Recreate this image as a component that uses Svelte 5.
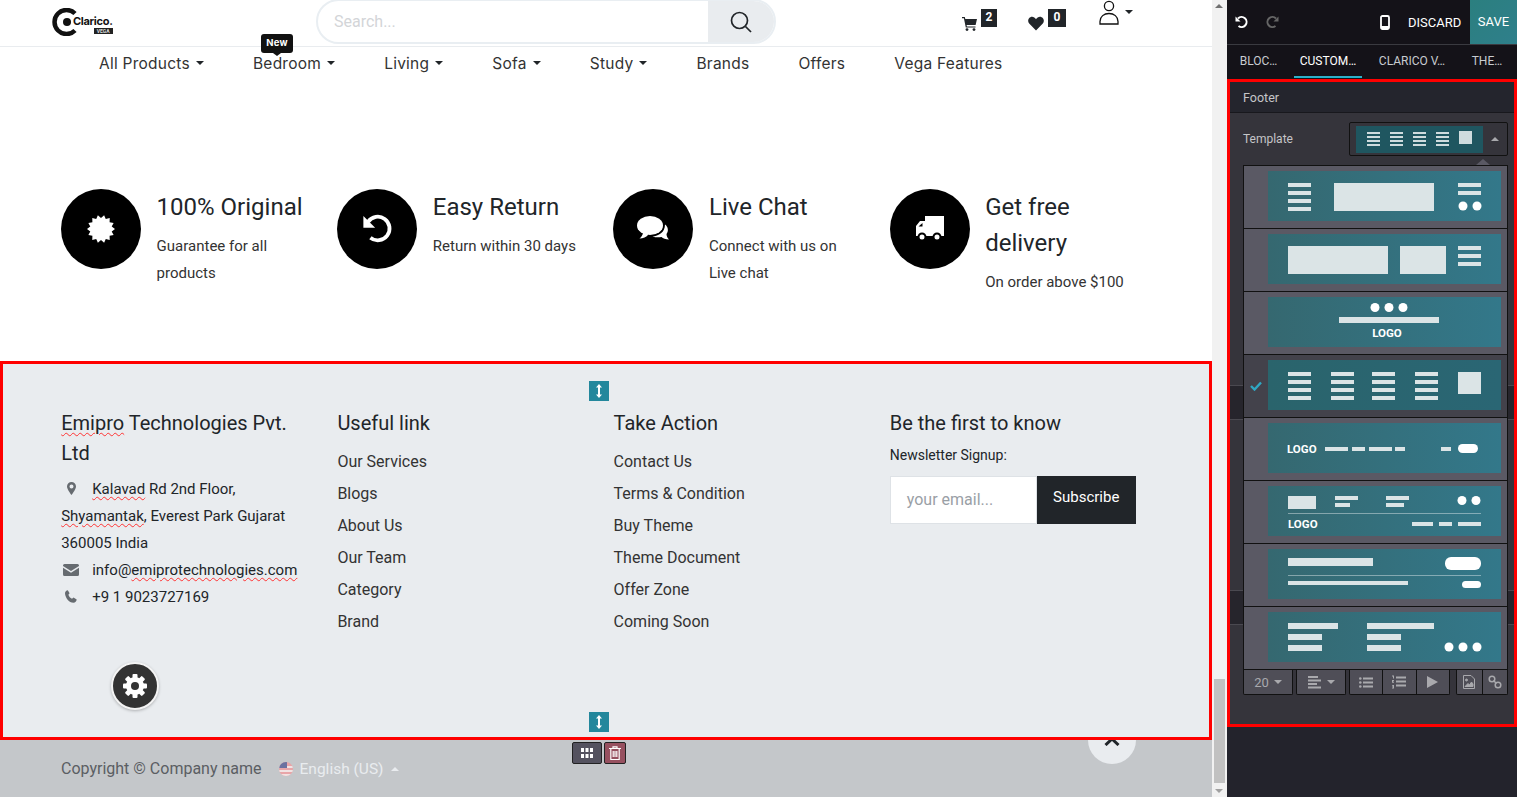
<script lang="ts">
  const nav = [
    { label: 'All Products', caret: true },
    { label: 'Bedroom', caret: true, badge: 'New' },
    { label: 'Living', caret: true },
    { label: 'Sofa', caret: true },
    { label: 'Study', caret: true },
    { label: 'Brands' },
    { label: 'Offers' },
    { label: 'Vega Features' },
  ];

  const usefulLinks = ['Our Services', 'Blogs', 'About Us', 'Our Team', 'Category', 'Brand'];
  const actionLinks = ['Contact Us', 'Terms & Condition', 'Buy Theme', 'Theme Document', 'Offer Zone', 'Coming Soon'];
  const tabs = ['BLOC…', 'CUSTOM…', 'CLARICO V…', 'THE…'];

  // starburst for the "100% Original" badge
  const burst = Array.from({ length: 28 }, (_, i) => {
    const a = (i * Math.PI) / 14;
    const r = i % 2 ? 11 : 14;
    return `${(14 + r * Math.cos(a)).toFixed(2)},${(14 + r * Math.sin(a)).toFixed(2)}`;
  }).join(' ');

  // [x, y, w, h, radius] and [cx, cy]; one entry per footer template
  const thumbs = [
    {
      rects: [[20,12,23,4],[20,20,23,4],[20,28,23,4],[20,36,23,4],[66,12,100,28],[190,12,23,4],[190,20,23,4]],
      dots: [[195,35],[209,35]],
    },
    {
      rects: [[20,12,100,28],[132,12,46,28],[190,12,23,4],[190,20,23,4],[190,28,23,4]],
    },
    {
      rects: [[71,20,100,6]],
      dots: [[107,10.5],[121,10.5],[135,10.5]],
      logo: [119, 40, 'middle'],
    },
    {
      rects: [[20,12,23,4],[20,20,23,4],[20,28,23,4],[20,36,23,4],[63,12,23,4],[63,20,23,4],[63,28,23,4],[63,36,23,4],
        [104,12,23,4],[104,20,23,4],[104,28,23,4],[104,36,23,4],[147,12,23,4],[147,20,23,4],[147,28,23,4],[147,36,23,4],[190,12,23,22]],
    },
    {
      rects: [[57,24,23,4],[84,24,13,4],[101,24,23,4],[127,24,10,4],[173,24,10,4],[190,21,20,9,4.5]],
      logo: [19, 30, 'start'],
    },
    {
      rects: [[20,10,28,13],[67,10,23,4],[67,17,15,4],[118,10,23,4],[118,17,18,4],[144,36,21,4],[171,36,13,4],[190,36,23,4]],
      dots: [[194,14.5],[208,14.5]],
      lines: [27],
      logo: [20, 42, 'start'],
    },
    {
      rects: [[20,9,85,8],[177,8,36,13,6],[20,32,120,4],[194,32,19,7,3.5]],
      lines: [26],
    },
    {
      rects: [[20,11,50,6],[99,11,67,6],[20,22,34,6],[99,22,34,6],[20,33,34,6],[99,33,34,6]],
      dots: [[181,35],[195,35],[209,35]],
    },
  ];
</script>

<div class="app">
  <main class="site">
    <header class="topbar">
      <div class="logo">
        <svg width="26" height="28" viewBox="0 0 26 28">
          <path d="M23 5.5A12 12 0 1 0 23 22.5" fill="none" stroke="#111" stroke-width="4.5" />
          <circle cx="15" cy="14" r="4" fill="#111" />
        </svg>
        <div class="logo-text">
          <span class="logo-name">Clarico.</span>
          <span class="logo-vega">VEGA</span>
        </div>
      </div>

      <div class="search">
        <span class="search-input">Search...</span>
        <span class="search-btn">
          <svg width="24" height="24" viewBox="0 0 24 24" fill="none" stroke="#212529" stroke-width="1.7">
            <circle cx="10.5" cy="10.5" r="8" />
            <path d="M16.5 16.5L22 22" />
          </svg>
        </span>
      </div>

      <div class="shop-icons">
        <div class="shop-icon cart">
          <svg width="15" height="15" viewBox="0 0 15 15" fill="#212529">
            <path d="M0 1h2.800l.5 2H15l-1.400 6H4.600l.3 1.400h8.600v1.200H3.800L1.900 2.200H0z" />
            <circle cx="5" cy="13.600" r="1.400" />
            <circle cx="12" cy="13.600" r="1.400" />
          </svg>
          <span class="count">2</span>
        </div>
        <div class="shop-icon heart">
          <svg width="16" height="15" viewBox="0 0 16 15" fill="#212529">
            <path d="M8 14.500L1.200 7.600C-.6 5.600 0 2.200 2.400 1.200 4.600.3 6.800 1.300 8 3.300 9.200 1.300 11.400.3 13.600 1.200 16 2.200 16.600 5.600 14.800 7.600z" />
          </svg>
          <span class="count">0</span>
        </div>
        <div class="user">
          <svg width="20" height="25" viewBox="0 0 20 25" fill="none" stroke="#111" stroke-width="1.300">
            <circle cx="10" cy="6" r="4.600" />
            <path d="M1 24v-2.500C1 16.500 5 13.500 10 13.500s9 3 9 8V24z" />
          </svg>
          <i class="caret user-caret"></i>
        </div>
      </div>
    </header>

    <nav class="menu">
      {#each nav as item}
        <span class="menu-item">
          {item.label}
          {#if item.caret}<i class="caret"></i>{/if}
          {#if item.badge}<span class="new-badge">{item.badge}</span>{/if}
        </span>
      {/each}
    </nav>

    <section class="features">
      <div class="feature">
        <span class="feature-icon">
          <svg width="28" height="28" viewBox="0 0 28 28"><polygon points={burst} fill="#fff" /></svg>
        </span>
        <div>
          <h3>100% Original</h3>
          <p>Guarantee for all products</p>
        </div>
      </div>
      <div class="feature">
        <span class="feature-icon">
          <svg width="33" height="33" viewBox="0 1 28 28" fill="none">
            <path d="M6 8.500A10 10 0 1 1 8 22" stroke="#fff" stroke-width="3.200" />
            <path d="M2 3.500V13.500H12z" fill="#fff" />
          </svg>
        </span>
        <div>
          <h3>Easy Return</h3>
          <p>Return within 30 days</p>
        </div>
      </div>
      <div class="feature">
        <span class="feature-icon">
          <svg width="32" height="28" viewBox="0 0 32 28">
            <path d="M28 9.500c3 2 4 6.500 1.500 9.500 0 2 1 4 2.500 5.500-3.500 0-6-1-7.500-2.500-2.500.5-6 .5-9-.5 6-.5 12.500-4 12.500-12z" fill="#fff" />
            <ellipse cx="13" cy="10.500" rx="13" ry="9.500" fill="#fff" />
            <path d="M6 17c0 3-2 5.500-3.500 6.500 3.500 0 7-1.500 9-4z" fill="#fff" />
          </svg>
        </span>
        <div>
          <h3>Live Chat</h3>
          <p>Connect with us on<br />Live chat</p>
        </div>
      </div>
      <div class="feature">
        <span class="feature-icon">
          <svg width="30" height="28" viewBox="0 0 30 28" fill="#fff">
            <path d="M10 1h19v20H10zM10 6H5L1 11v10h9z" />
            <path d="M7.500 8v3.500H3.500z" fill="#000" />
            <circle cx="7" cy="22" r="3.500" stroke="#000" stroke-width="2" />
            <circle cx="22" cy="22" r="3.500" stroke="#000" stroke-width="2" />
          </svg>
        </span>
        <div>
          <h3>Get free delivery</h3>
          <p>On order above $100</p>
        </div>
      </div>
    </section>

    <footer class="footer">
      <span class="resize resize-top">
        <svg width="8" height="14" viewBox="0 0 8 14" fill="#fff"><path d="M4 0L7 3.500H5v7h2L4 14 1 10.500h2v-7H1z" /></svg>
      </span>
      <span class="resize resize-bottom">
        <svg width="8" height="14" viewBox="0 0 8 14" fill="#fff"><path d="M4 0L7 3.500H5v7h2L4 14 1 10.500h2v-7H1z" /></svg>
      </span>

      <div class="col">
        <h4><span class="typo">Emipro</span> Technologies Pvt. Ltd</h4>
        <div class="address">
          <p>
            <span class="addr-icon">
              <svg width="9" height="13" viewBox="0 0 9 13" fill="#666b70"><path fill-rule="evenodd" d="M4.500 0A4.500 4.500 0 0 1 9 4.500C9 7 6 11 4.500 13 3 11 0 7 0 4.500A4.500 4.500 0 0 1 4.500 0zm0 2.500a2 2 0 1 0 0 4 2 2 0 0 0 0-4z" /></svg>
            </span><span class="typo">Kalavad</span> Rd 2nd Floor, <span class="typo">Shyamantak</span>, Everest Park Gujarat 360005 India
          </p>
          <p>
            <span class="addr-icon">
              <svg width="16" height="12" viewBox="0 0 16 12" fill="#666b70"><path d="M0 1.500A1.500 1.500 0 0 1 1.500 0h13A1.500 1.500 0 0 1 16 1.500v.5L8 7 0 2zM0 3.800V10.500A1.500 1.500 0 0 0 1.500 12h13a1.500 1.500 0 0 0 1.500-1.500V3.800L8 8.800z" /></svg>
            </span>info@<span class="typo">emiprotechnologies.com</span>
          </p>
          <p>
            <span class="addr-icon">
              <svg width="12" height="13" viewBox="0 0 12 13" fill="#666b70"><path d="M2.800.2l1.800 3-1.200 1.500c.6 1.800 1.900 3.200 3.600 4.100l1.500-1.200 3.200 1.900c-.2 1.600-1.500 3.300-3.200 3.300C4 12.800.2 7.500 0 3.200 0 1.700 1.300.4 2.800.2z" /></svg>
            </span>+9 1 9023727169
          </p>
        </div>
      </div>

      <div class="col">
        <h4>Useful link</h4>
        <ul>{#each usefulLinks as link}<li>{link}</li>{/each}</ul>
      </div>

      <div class="col">
        <h4>Take Action</h4>
        <ul>{#each actionLinks as link}<li>{link}</li>{/each}</ul>
      </div>

      <div class="col">
        <h4>Be the first to know</h4>
        <div class="signup-label">Newsletter Signup:</div>
        <div class="signup">
          <span class="signup-input">your email...</span>
          <span class="signup-btn">Subscribe</span>
        </div>
      </div>

      <span class="gear">
        <svg width="26" height="26" viewBox="0 0 26 26">
          <circle cx="13" cy="13" r="6.500" fill="none" stroke="#fff" stroke-width="5" />
          {#each [0, 45, 90, 135] as deg}
            <rect x="10.500" y="1" width="5" height="24" rx="1" fill="#fff" transform="rotate({deg} 13 13)" />
          {/each}
          <circle cx="13" cy="13" r="4" fill="#333" />
        </svg>
      </span>
    </footer>

    <div class="copyright">
      <span>Copyright © Company name</span>
      <span class="lang">
        <svg class="flag" width="14" height="14" viewBox="0 0 14 14">
          <clipPath id="flag-clip"><circle cx="7" cy="7" r="7" /></clipPath>
          <g clip-path="url(#flag-clip)">
            <rect width="14" height="14" fill="#e8a5a8" />
            <rect y="4" width="14" height="2" fill="#f1e3e3" />
            <rect y="8" width="14" height="2" fill="#f1e3e3" />
            <rect y="12" width="14" height="2" fill="#f1e3e3" />
            <rect width="8" height="6" fill="#6a72a0" />
          </g>
        </svg>
        English (US)
        <i class="caret caret-up"></i>
      </span>
      <div class="section-tools">
        <span class="tool tool-move">
          <svg width="12" height="10" viewBox="0 0 12 10" fill="#fff">
            <rect width="3" height="4" /><rect x="4.500" width="3" height="4" /><rect x="9" width="3" height="4" />
            <rect y="6" width="3" height="4" /><rect x="4.500" y="6" width="3" height="4" /><rect x="9" y="6" width="3" height="4" />
          </svg>
        </span>
        <span class="tool tool-delete">
          <svg width="12" height="14" viewBox="0 0 12 14" fill="none" stroke="#fff" stroke-width="1.200">
            <path d="M0 2.500h12M4 2.500V.8h4v1.700M1.800 2.500v11h8.400v-11M4.200 5v6M6 5v6M7.800 5v6" />
          </svg>
        </span>
      </div>
      <span class="back-top">
        <svg width="16" height="10" viewBox="0 0 16 10" fill="none" stroke="#212529" stroke-width="3"><path d="M1.500 9L8 3l6.500 6" /></svg>
      </span>
    </div>

    <div class="scrollbar">
      <i class="scroll-arrow scroll-up"></i>
      <i class="scroll-thumb"></i>
      <i class="scroll-arrow scroll-down"></i>
    </div>
  </main>

  <aside class="editor">
    <div class="editor-head">
      <svg class="ic-undo" width="14" height="14" viewBox="0 0 14 14" fill="none">
        <path d="M3 3.500A5 5 0 1 1 3.500 11" stroke="#fff" stroke-width="2" />
        <path d="M.5 1.500v5h5z" fill="#fff" />
      </svg>
      <svg class="ic-redo" width="14" height="14" viewBox="0 0 14 14" fill="none">
        <path d="M11 3.500A5 5 0 1 0 10.500 11" stroke="#666" stroke-width="2" />
        <path d="M13.500 1.500v5h-5z" fill="#666" />
      </svg>
      <svg class="ic-phone" width="10" height="15" viewBox="0 0 10 15" fill="none">
        <rect x="1" y="1" width="8" height="13" rx="1.500" stroke="#fff" stroke-width="1.800" />
        <rect x="1" y="11" width="8" height="3" fill="#fff" />
      </svg>
      <span class="discard">DISCARD</span>
      <span class="save">SAVE</span>
    </div>

    <div class="tabs">
      {#each tabs as tab, i}
        <span class="tab" class:active={i === 1}>{tab}</span>
      {/each}
    </div>

    <div class="panel">
      <i class="band band-a"></i>
      <i class="band band-b"></i>

      <div class="panel-title">Footer</div>

      <div class="template-row">
        <span class="template-label">Template</span>
        <div class="template-select">
          <div class="template-preview">
            {#each [0, 1, 2, 3] as col}
              <span class="mini-lines"><i></i><i></i><i></i><i></i></span>
            {/each}
            <span class="mini-square"></span>
          </div>
          <i class="caret caret-up caret-grey"></i>
        </div>
      </div>

      <div class="dropdown">
        <i class="notch"></i>
        {#each thumbs as t, i}
          <div class="template-item" class:selected={i === 3}>
            {#if i === 3}
              <svg class="check" width="12" height="10" viewBox="0 0 12 10" fill="none" stroke="#2fa8c4" stroke-width="2.400"><path d="M1 5l3.500 3.500L11 1.500" /></svg>
            {/if}
            <svg class="thumb" width="233" height="50" viewBox="0 0 233 50">
              {#each t.lines ?? [] as y}
                <rect x="20" {y} width="193" height="1" fill="#fff" opacity="0.4" />
              {/each}
              {#each t.rects as r}
                <rect x={r[0]} y={r[1]} width={r[2]} height={r[3]} rx={r[4] ?? 0} fill={r[4] ? '#fff' : '#dbe4e6'} />
              {/each}
              {#each t.dots ?? [] as d}
                <circle cx={d[0]} cy={d[1]} r="4.500" fill="#fff" />
              {/each}
              {#if t.logo}
                <text x={t.logo[0]} y={t.logo[1]} text-anchor={t.logo[2]} class="thumb-logo">LOGO</text>
              {/if}
            </svg>
          </div>
        {/each}
      </div>

      <div class="toolbar">
        <div class="tool-group size"><span class="btn">20<i class="caret caret-grey"></i></span></div>
        <div class="tool-group size">
          <span class="btn">
            <svg width="14" height="13" viewBox="0 0 14 13" fill="#a9a9ad"><path d="M0 0h10v2H0zM0 3.500h13v2H0zM0 7h9v2H0zM0 10.500h13v2H0z" /></svg>
            <i class="caret caret-grey"></i>
          </span>
        </div>
        <div class="tool-group lists">
          <span class="btn">
            <svg width="14" height="11" viewBox="0 0 14 11" fill="#a9a9ad"><circle cx="1.300" cy="1.500" r="1.300" /><circle cx="1.300" cy="5.500" r="1.300" /><circle cx="1.300" cy="9.500" r="1.300" /><path d="M4 .5h10v2H4zM4 4.500h10v2H4zM4 8.500h10v2H4z" /></svg>
          </span>
          <span class="btn">
            <svg width="14" height="14" viewBox="0 0 14 14" fill="#a9a9ad"><path d="M0 .5h2v3H1V1.500H0zM0 5h2v.8l-1 1.200h1v.8H0zM0 10h2v3.500H0v-.7h1v-.6H0v-.7h1v-.8H0zM4 1.500h10v2H4zM4 5.500h10v2H4zM4 9.500h10v2H4z" /></svg>
          </span>
          <span class="btn">
            <svg width="12" height="12" viewBox="0 0 12 12" fill="#a9a9ad"><path d="M0 0l11 6-11 6z" /></svg>
          </span>
        </div>
        <div class="tool-group files">
          <span class="btn">
            <svg width="12" height="14" viewBox="0 0 12 14" fill="none" stroke="#a9a9ad"><path d="M.5.500h7.500l3.500 3.500v9.500H.5z" /><circle cx="3.500" cy="5" r="1" fill="#a9a9ad" /><path d="M2 11.500l3-3 1.500 1.500 2-3 1.500 2v2.500z" fill="#a9a9ad" /></svg>
          </span>
          <span class="btn">
            <svg width="14" height="14" viewBox="0 0 14 14" fill="none" stroke="#a9a9ad" stroke-width="1.500"><circle cx="4" cy="4" r="2.800" /><circle cx="10" cy="10" r="2.800" /><path d="M5.500 5.500l3 3" /></svg>
          </span>
        </div>
      </div>
    </div>
  </aside>
</div>

<style>
  :global(body) {
    margin: 0;
    overflow: hidden;
  }

  .app {
    display: flex;
    width: 1517px;
    height: 797px;
    overflow: hidden;
    font-family: Roboto, 'Liberation Sans', sans-serif;
    color: #212529;
  }

  .site {
    position: relative;
    width: 1227px;
    flex-shrink: 0;
    padding-right: 15px;
    box-sizing: border-box;
    background: #fff;
  }

  .topbar {
    display: flex;
    height: 46px;
    border-bottom: 1px solid #e9ecef;
  }

  .logo {
    display: flex;
    align-items: center;
    margin-left: 52px;
    width: 264px;
    height: 44px;
  }

  .logo-text {
    display: flex;
    flex-direction: column;
    align-items: flex-end;
    margin-left: -5px;
    padding-top: 6px;
  }

  .logo-name {
    font-size: 11px;
    font-weight: 700;
    line-height: 11px;
    color: #111;
    font-family: Inter, sans-serif;
    letter-spacing: -0.3px;
  }

  .logo-vega {
    margin-top: 1px;
    padding: 0 3px;
    background: #222;
    color: #ddd;
    font-size: 5px;
    line-height: 6px;
    font-weight: 700;
  }

  .search {
    display: flex;
    width: 460px;
    height: 45px;
    margin-top: -1px;
    box-sizing: border-box;
    border: 2px solid #e9eef2;
    border-radius: 23px;
    overflow: hidden;
  }

  .search-input {
    flex: 1;
    padding-left: 16px;
    line-height: 41px;
    font-size: 16px;
    color: #d3d5d8;
  }

  .search-btn {
    display: flex;
    align-items: center;
    justify-content: center;
    width: 66px;
    background: #e9ecef;
  }

  .shop-icons {
    display: flex;
    margin-left: 186px;
  }

  .shop-icon {
    position: relative;
    display: flex;
    align-items: flex-start;
    padding-top: 16px;
    box-sizing: border-box;
    gap: 4px;
  }

  .cart {
    width: 66px;
  }

  .heart {
    width: 71px;
  }

  .count {
    box-sizing: border-box;
    margin-top: -7px;
    width: 16px;
    height: 18px;
    background: #212529;
    color: #fff;
    font-size: 12px;
    font-weight: 700;
    line-height: 16px;
    text-align: center;
  }

  .heart .count {
    width: 18px;
  }

  .user {
    display: flex;
    align-items: flex-start;
  }

  .user-caret {
    margin: 10px 0 0 6px;
  }

  .caret {
    display: inline-block;
    width: 0;
    height: 0;
    border-left: 4.500px solid transparent;
    border-right: 4.500px solid transparent;
    border-top: 4.500px solid #212529;
  }

  .caret-up {
    border-top: 0;
    border-bottom: 4px solid #e9ecef;
  }

  .caret-grey {
    border-top-color: #a9a9ad;
    border-bottom-color: #a9a9ad;
  }

  .menu {
    display: flex;
    gap: 49px;
    height: 32px;
    padding: 0 0 2px 99px;
    align-items: center;
    font-family: Inter, sans-serif;
    font-size: 15.500px;
    color: #333;
  }

  .menu-item {
    position: relative;
    display: flex;
    align-items: center;
    gap: 6px;
    white-space: nowrap;
    letter-spacing: 0.25px;
  }

  .new-badge {
    position: absolute;
    left: 8px;
    top: -20px;
    width: 32px;
    height: 19px;
    border-radius: 3px;
    background: #111;
    color: #fff;
    font-size: 9.500px;
    font-weight: 700;
    line-height: 18px;
    text-align: center;
  }

  .new-badge::after {
    content: '';
    position: absolute;
    left: 12px;
    bottom: -3px;
    border-left: 4px solid transparent;
    border-right: 4px solid transparent;
    border-top: 3px solid #111;
  }

  .features {
    display: grid;
    grid-template-columns: repeat(4, 276.200px);
    height: 280px;
    padding: 108px 0 0 61px;
    box-sizing: border-box;
  }

  .feature {
    display: flex;
    gap: 15.600px;
  }

  .feature:last-child h3 {
    width: 120px;
  }

  .feature-icon {
    display: flex;
    align-items: center;
    justify-content: center;
    width: 80px;
    height: 80px;
    flex-shrink: 0;
    border-radius: 50%;
    background: #000;
  }

  .feature h3 {
    margin: 0 0 8px;
    font-size: 24px;
    font-weight: 400;
    line-height: 36px;
  }

  .feature p {
    margin: 0;
    width: 150px;
    font-size: 15px;
    line-height: 27px;
    color: #333;
  }

  .feature:last-child p {
    width: 170px;
  }

  .footer {
    position: relative;
    display: grid;
    grid-template-columns: repeat(4, 276.200px);
    height: 379px;
    padding: 44px 0 0 58.200px;
    box-sizing: border-box;
    border: 3px solid #f00;
    background: #e9ecef;
  }

  .resize {
    position: absolute;
    left: 586px;
    display: flex;
    align-items: center;
    justify-content: center;
    width: 20px;
    height: 20px;
    background: #23879c;
  }

  .resize-top {
    top: 17px;
  }

  .resize-bottom {
    bottom: 5px;
  }

  .col h4 {
    margin: 0 0 8px;
    width: 246px;
    font-size: 20px;
    font-weight: 400;
    line-height: 30px;
    color: #212529;
  }

  .typo {
    text-decoration: underline wavy #f33 1px;
    text-underline-offset: 2px;
  }

  .address {
    width: 246px;
    font-size: 15px;
    line-height: 27px;
  }

  .address p {
    margin: 0;
  }

  .addr-icon {
    display: inline-flex;
    justify-content: center;
    width: 20px;
    margin-right: 11px;
    vertical-align: -1px;
  }

  .col ul {
    margin: 0;
    padding: 0;
    list-style: none;
    font-size: 16px;
    line-height: 32px;
    color: #333;
  }

  .signup-label {
    margin-top: -4px;
    font-size: 14px;
    line-height: 26px;
  }

  .signup {
    display: flex;
    width: 246px;
    height: 48px;
    margin-top: 8px;
  }

  .signup-input {
    width: 147px;
    padding-left: 16px;
    box-sizing: border-box;
    border: 1px solid #dee2e6;
    background: #fff;
    color: #9aa0a6;
    font-size: 16px;
    line-height: 46px;
  }

  .signup-btn {
    flex: 1;
    background: #212529;
    color: #fff;
    font-size: 15px;
    line-height: 42px;
    text-align: center;
  }

  .gear {
    position: absolute;
    left: 108px;
    top: 298px;
    display: flex;
    align-items: center;
    justify-content: center;
    width: 44px;
    height: 44px;
    border: 2px solid #f4f4f4;
    border-radius: 50%;
    background: #333;
    box-shadow: 0 1px 3px rgba(0, 0, 0, 0.25);
  }

  .copyright {
    position: relative;
    display: flex;
    align-items: center;
    gap: 17px;
    height: 57px;
    padding-left: 61px;
    background: #c4c7ca;
    color: #5b5e63;
    font-size: 16px;
  }

  .lang {
    display: flex;
    align-items: center;
    gap: 7px;
    color: #e9ecef;
    font-size: 15.500px;
  }

  .section-tools {
    position: absolute;
    left: 572px;
    top: 2px;
    display: flex;
    gap: 2px;
  }

  .tool {
    display: flex;
    align-items: center;
    justify-content: center;
    height: 20px;
    border: 1px solid #222;
    border-radius: 2px;
  }

  .tool-move {
    width: 28px;
    background: #54525f;
  }

  .tool-delete {
    width: 20px;
    background: #96505f;
  }

  .back-top {
    position: absolute;
    left: 1088px;
    top: -24px;
    display: flex;
    justify-content: center;
    align-items: flex-start;
    padding-top: 20px;
    width: 48px;
    height: 28px;
    border-radius: 0 0 24px 24px;
    background: #e9ecef;
    clip-path: inset(24px 0 0 0);
  }

  .scrollbar {
    position: absolute;
    top: 0;
    right: 0;
    bottom: 0;
    width: 15px;
    background: #f1f1f1;
  }

  .scroll-thumb {
    position: absolute;
    left: 2px;
    top: 679px;
    width: 11px;
    height: 104px;
    background: #c1c1c1;
  }

  .scroll-arrow {
    position: absolute;
    left: 3px;
    border-left: 4px solid transparent;
    border-right: 4px solid transparent;
  }

  .scroll-up {
    top: 4px;
    border-bottom: 4px solid #707070;
  }

  .scroll-down {
    bottom: 4px;
    border-top: 4px solid #a0a0a0;
  }

  .editor {
    display: flex;
    flex-direction: column;
    width: 290px;
    flex-shrink: 0;
    background: #23232c;
    color: #ddd;
    font-size: 12px;
  }

  .editor-head {
    display: flex;
    align-items: center;
    height: 44px;
    border-bottom: 1px solid #3a3a40;
    background: #141218;
    color: #fff;
  }

  .ic-undo {
    margin-left: 8px;
  }

  .ic-redo {
    margin-left: 16px;
  }

  .ic-phone {
    margin-left: 101px;
  }

  .discard {
    margin-left: 18px;
    font-size: 13px;
    width: 62px;
  }

  .save {
    flex: 1;
    align-self: stretch;
    background: linear-gradient(135deg, #2b7f7f, #2f7f8b);
    font-size: 13px;
    line-height: 44px;
    text-align: center;
  }

  .tabs {
    display: flex;
    height: 34px;
    background: #141218;
  }

  .tab {
    display: flex;
    align-items: center;
    justify-content: center;
    height: 30px;
    padding-top: 1px;
    font-size: 12px;
    color: #c8ccd0;
    white-space: nowrap;
  }

  .tab:nth-child(1) {
    width: 63px;
    margin-right: 4px;
  }

  .tab:nth-child(2) {
    width: 68px;
  }

  .tab:nth-child(3) {
    width: 84px;
    margin-left: 8px;
  }

  .tab:nth-child(4) {
    width: 50px;
    margin-left: 8px;
  }

  .tab.active {
    border-bottom: 2px solid #2ab0c8;
    color: #fff;
  }

  .panel {
    position: relative;
    display: flex;
    flex-direction: column;
    height: 648px;
    box-sizing: border-box;
    border: 3px solid #f00;
    background: #35343b;
  }

  .band {
    position: absolute;
    left: 0;
    right: 0;
    background: #26252c;
    border-top: 1px solid #4a4950;
    border-bottom: 1px solid #4a4950;
  }

  .band-a {
    top: 303px;
    height: 33px;
  }

  .band-b {
    top: 508px;
    height: 33px;
  }

  .panel-title {
    position: relative;
    height: 31px;
    padding-left: 13px;
    box-sizing: border-box;
    border-bottom: 1px solid #18181d;
    background: #24252d;
    font-size: 12.500px;
    line-height: 31px;
    color: #c5c5c8;
  }

  .template-row {
    position: relative;
    display: flex;
    align-items: center;
    justify-content: space-between;
    margin: 9px 6px 9px 13px;
  }

  .template-label {
    font-size: 12px;
    color: #c5c5c8;
  }

  .template-select {
    display: flex;
    align-items: center;
    width: 159px;
    height: 34px;
    box-sizing: border-box;
    border: 1px solid #111;
    border-radius: 2px;
    background: #35343b;
    padding-left: 6px;
    gap: 8px;
  }

  .template-preview {
    display: flex;
    align-items: center;
    gap: 10px;
    width: 127px;
    height: 27px;
    padding-left: 11px;
    box-sizing: border-box;
    background: #1f5660;
  }

  .mini-lines {
    display: flex;
    flex-direction: column;
    gap: 2px;
    width: 13px;
  }

  .mini-lines i {
    height: 2px;
    background: #cfdcde;
  }

  .mini-square {
    width: 13px;
    height: 13px;
    margin-top: -4px;
    background: #cfdcde;
  }

  .dropdown {
    position: relative;
    width: 265px;
    margin-left: 13px;
    border: 1px solid #111;
    border-bottom: 0;
    background: #5a5964;
    box-sizing: border-box;
  }

  .notch {
    position: absolute;
    right: 17px;
    top: -7px;
    border-left: 7px solid transparent;
    border-right: 7px solid transparent;
    border-bottom: 6px solid #5a5964;
  }

  .template-item {
    position: relative;
    height: 63px;
    padding: 5px 0 0 24px;
    box-sizing: border-box;
    border-bottom: 1px solid #111;
  }

  .template-item.selected {
    background: #43424b;
  }

  .check {
    position: absolute;
    left: 6px;
    top: 26px;
  }

  .thumb {
    display: block;
    background: linear-gradient(90deg, #356870, #33788a);
  }

  .selected .thumb {
    background: linear-gradient(90deg, #2a646c, #2a6674);
  }

  .thumb-logo {
    fill: #fff;
    font-family: Roboto, sans-serif;
    font-size: 11.500px;
    font-weight: 700;
  }

  .toolbar {
    position: relative;
    display: flex;
    gap: 3px;
    margin-left: 13px;
    color: #a9a9ad;
    font-size: 13px;
  }

  .tool-group {
    display: flex;
    height: 25px;
    box-sizing: border-box;
    border: 1px solid #111;
    border-top: 0;
    border-radius: 0 0 2px 2px;
    background: #4f4e57;
  }

  .size {
    width: 50px;
  }

  .lists {
    width: 101px;
  }

  .files {
    width: 52px;
    margin-left: 3px;
  }

  .btn {
    flex: 1;
    display: flex;
    align-items: center;
    justify-content: center;
    gap: 5px;
  }

  .lists .btn + .btn,
  .files .btn + .btn {
    border-left: 1px solid #111;
  }
</style>
